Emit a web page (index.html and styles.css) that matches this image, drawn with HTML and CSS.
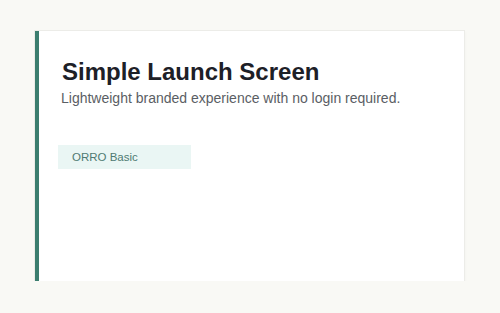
FILE: index.html
```html
<!DOCTYPE html>
<html lang="en">
  <head>
    <meta charset="UTF-8" />
    <meta name="viewport" content="width=500" />
    <title>Simple Launch Screen</title>
    <link rel="stylesheet" href="styles.css">
  </head>
  <body>
    <div class="page">
      <div class="card">
        <h1 class="title">Simple Launch Screen</h1>
        <p class="subtitle">Lightweight branded experience with no login required.</p>
        <div class="badge">ORRO Basic</div>
      </div>
    </div>
  </body>
</html>
```

FILE: styles.css
```css
body {
  margin: 0;
  font-family: "Liberation Sans", Arial, sans-serif;
  background: #f9f9f5;
}

.page {
  padding: 31px 0 0 35px;
}

.card {
  width: 429px;
  height: 250px;
  box-sizing: border-box;
  background: #fff;
  border-left: 4px solid #3c7e6f;
  box-shadow: 0 0 0 1px #ecece8, 1px 1px 3px rgba(0, 0, 0, 0.04);
  padding: 27px 22px 0 22px;
}

.title {
  margin: 0;
  font-size: 24px;
  font-weight: 700;
  color: #1d2027;
  padding-left: 1px;
}

.subtitle {
  margin: 4px 0 0 0;
  font-size: 14px;
  color: #5a5e64;
}

.badge {
  margin-top: 39px;
  width: 133px;
  height: 24px;
  box-sizing: border-box;
  padding-left: 14px;
  display: flex;
  align-items: center;
  background: #eaf6f4;
  color: #4f7a72;
  font-size: 11.5px;
  margin-left: -3px;
}
```
